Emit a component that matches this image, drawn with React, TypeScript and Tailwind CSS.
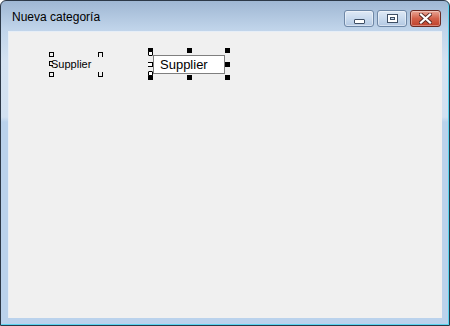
import React from 'react';

const Handle = ({ x, y, filled = false }: { x: number; y: number; filled?: boolean }) => (
  <div
    className={`absolute w-[5px] h-[5px] border border-black ${filled ? 'bg-black' : 'bg-white'}`}
    style={{ left: x, top: y }}
  />
);

const CaptionButton = ({ kind }: { kind: 'min' | 'max' | 'close' }) => {
  if (kind === 'close') {
    return (
      <div className="w-[31px] h-[17px] rounded-[3px] border border-[#6b2a22] bg-gradient-to-b from-[#e8a595] via-[#d2614a] to-[#c0412b] flex items-center justify-center shadow-[inset_0_0_0_1px_rgba(255,255,255,0.35)]">
        <svg width="13" height="11" viewBox="0 0 13 11">
          <path d="M2 1.5 L11 9.5 M11 1.5 L2 9.5" stroke="#5a2a24" strokeWidth="4" strokeLinecap="square" />
          <path d="M2 1.5 L11 9.5 M11 1.5 L2 9.5" stroke="#ffffff" strokeWidth="2.2" strokeLinecap="square" />
        </svg>
      </div>
    );
  }
  return (
    <div className="w-[30px] h-[17px] rounded-[3px] border border-[#6e87a6] bg-gradient-to-b from-[#dfe9f5] via-[#c9daee] to-[#b3c8e2] flex items-center justify-center shadow-[inset_0_0_0_1px_rgba(255,255,255,0.45)]">
      {kind === 'min' ? (
        <div className="mt-[5px] w-[11px] h-[5px] bg-white border border-[#3e4e64] rounded-[1px]" />
      ) : (
        <div className="w-[11px] h-[9px] bg-white border border-[#3e4e64] flex items-center justify-center">
          <div className="w-[5px] h-[3px] border border-[#3e4e64] bg-[#c9daee]" />
        </div>
      )}
    </div>
  );
};

export default function App() {
  return (
    <div className="w-[450px] h-[326px] bg-white" style={{ fontFamily: '"Liberation Sans", Arial, sans-serif' }}>
      <div className="w-full h-full flex flex-col rounded-t-[6px] border border-[#2c3847] bg-[linear-gradient(to_bottom,#9fb7d3_0px,#c0d4ea_28px,#d4e2f1_60px,#d2e1f1_116px,#bad2ec_121px)] shadow-[inset_-1px_-1px_0_#5ad4ef]">
        {/* title bar */}
        <div className="h-[30px] flex items-start justify-between pl-[11px] pr-[8px] pt-[9px]">
          <span className="text-[12px] leading-[14px] text-black">Nueva categoría</span>
          <div className="flex gap-[3px]">
            <CaptionButton kind="min" />
            <CaptionButton kind="max" />
            <CaptionButton kind="close" />
          </div>
        </div>
        {/* client area */}
        <div className="flex-1 px-[7px] pb-[7px] flex">
          <div className="relative flex-1 bg-[#f0f0f0] border-t border-l border-[#e6eef7]">
            {/* label control on the design surface */}
            <div className="absolute left-[40px] top-[20px] w-[55px] h-[25px]">
              <span className="absolute left-[2px] top-[6px] text-[11px] leading-[13px] text-black">Supplier</span>
              <div className="absolute left-0 top-0 w-[5px] h-[5px] border border-black" />
              <div className="absolute right-[1px] top-0 w-[5px] h-[5px] border border-black border-b-0" />
              <div className="absolute left-0 top-[9px] w-[4px] h-[5px] border border-black border-r-0" />
              <div className="absolute left-0 bottom-0 w-[5px] h-[5px] border border-black" />
              <div className="absolute right-[1px] bottom-0 w-[5px] h-[5px] border border-black border-t-0" />
            </div>

            {/* textbox control on the design surface */}
            <div className="absolute left-[144px] top-[23px] w-[72px] h-[19px] bg-white border border-[#7f7f7f] flex items-center pl-[6px]">
              <span className="text-[13px] leading-[15px] text-black">Supplier</span>
            </div>
            <Handle x={139} y={16} filled />
            <Handle x={178} y={16} filled />
            <Handle x={216} y={16} filled />
            <Handle x={216} y={30} filled />
            <Handle x={139} y={43} filled />
            <Handle x={178} y={43} filled />
            <Handle x={216} y={43} filled />
            <div className="absolute left-[139px] top-[19px] w-[5px] h-[5px] rounded-[1px] border border-black bg-white" />
            <div className="absolute left-[139px] top-[30px] w-[5px] h-[5px] border border-black border-l-0 bg-white" />
            <div className="absolute left-[139px] top-[39px] w-[5px] h-[5px] rounded-[1px] border border-black bg-white" />
          </div>
        </div>
      </div>
    </div>
  );
}
